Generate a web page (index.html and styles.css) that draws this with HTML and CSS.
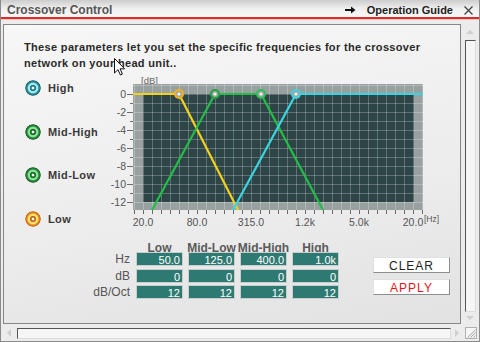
FILE: index.html
```html
<!DOCTYPE html>
<html lang="en">
<head>
    <meta charset="UTF-8">
    <title>Crossover Control</title>
    <link rel="stylesheet" href="styles.css">
</head>
<body>
    <div class="window">
        <div class="titlebar">
            <span class="title">Crossover Control</span>
            <span class="guide">
                <svg class="guide-arrow" width="11" height="8" viewBox="0 0 11 8"><path d="M0 4H7" stroke="#111" stroke-width="2"/><path d="M6 0.5L10.5 4L6 7.5Z" fill="#111"/></svg>
                Operation Guide
            </span>
            <svg class="close" width="9" height="9" viewBox="0 0 9 9"><path d="M0.5 0.5L8.5 8.5M8.5 0.5L0.5 8.5" stroke="#444" stroke-width="1.3"/></svg>
        </div>

        <div class="window-body">
            <div class="panel">
                <p class="intro">These parameters let you set the specific frequencies for the crossover network on your head unit..</p>

                <div class="main">
                    <ul class="bands">
                        <li><span class="dot dot-high"></span>High</li>
                        <li><span class="dot dot-green"></span>Mid-High</li>
                        <li><span class="dot dot-green"></span>Mid-Low</li>
                        <li><span class="dot dot-low"></span>Low</li>
                    </ul>

                    <svg class="chart" width="345" height="153" viewBox="-15 0 345 153">
                        <defs>
                            <pattern id="grid" x="28" y="18" width="9" height="9" patternUnits="userSpaceOnUse">
                                <path d="M0.5 0V9M0 0.5H9" stroke="#ffffff" stroke-opacity="0.24" fill="none"/>
                            </pattern>
                            <pattern id="ticks" x="28" y="0" width="9" height="9" patternUnits="userSpaceOnUse">
                                <path d="M0.5 0V9" stroke="#6a6a6a"/>
                            </pattern>
                        </defs>

                        <text class="unit" x="26" y="7.5">[dB]</text>
                        <g class="ylabels">
                            <text x="11" y="21.5">0</text>
                            <text x="11" y="39.5">-2</text>
                            <text x="11" y="57.5">-4</text>
                            <text x="11" y="75.5">-6</text>
                            <text x="11" y="93.5">-8</text>
                            <text x="11" y="111.5">-10</text>
                            <text x="11" y="129.5">-12</text>
                        </g>
                        <path class="yticks" d="M12 18.5H18M15 27.5H18M12 36.5H18M15 45.5H18M12 54.5H18M15 63.5H18M12 72.5H18M15 81.5H18M12 90.5H18M15 99.5H18M12 108.5H18M15 117.5H18M12 126.5H18"/>

                        <rect x="18" y="8" width="290" height="126" fill="#98a0a0"/>
                        <rect x="28" y="18" width="271" height="108" fill="#2e4548"/>
                        <rect x="18" y="8" width="290" height="126" fill="url(#grid)"/>
                        <rect x="18" y="134" width="290" height="4" fill="url(#ticks)"/>

                        <g class="xlabels">
                            <text x="28" y="150">20.0</text>
                            <text x="82" y="150">80.0</text>
                            <text x="136" y="150">315.0</text>
                            <text x="190" y="150">1.2k</text>
                            <text x="244" y="150">5.0k</text>
                            <text x="298" y="150">20.0</text>
                        </g>
                        <text class="hz" x="309" y="146">[Hz]</text>

                        <!-- filter slopes -->
                        <path class="curve" d="M18 18H64L123 134" stroke="#f3d21c"/>
                        <path class="curve" d="M37 134L100 18H146L208 134" stroke="#22be46"/>
                        <path class="curve" d="M118 134L181 18H308" stroke="#3ad5e2"/>

                        <circle class="handle" cx="64" cy="18" r="4" stroke="#f2b417"/>
                        <circle class="handle" cx="100" cy="18" r="4" stroke="#1fa541"/>
                        <circle class="handle" cx="146" cy="18" r="4" stroke="#2cc055"/>
                        <circle class="handle" cx="181" cy="18" r="4" stroke="#3ad5e2"/>
                        <circle class="handle-core" cx="64" cy="18" r="1.6"/>
                        <circle class="handle-core" cx="100" cy="18" r="1.6"/>
                        <circle class="handle-core" cx="146" cy="18" r="1.6"/>
                        <circle class="handle-core" cx="181" cy="18" r="1.6"/>
                    </svg>
                </div>

                <div class="bottom">
                    <div class="values">
                        <span></span>
                        <span class="head">Low</span>
                        <span class="head">Mid-Low</span>
                        <span class="head">Mid-High</span>
                        <span class="head">High</span>

                        <span class="row-label">Hz</span>
                        <span class="cell">50.0</span>
                        <span class="cell">125.0</span>
                        <span class="cell">400.0</span>
                        <span class="cell">1.0k</span>

                        <span class="row-label">dB</span>
                        <span class="cell">0</span>
                        <span class="cell">0</span>
                        <span class="cell">0</span>
                        <span class="cell">0</span>

                        <span class="row-label">dB/Oct</span>
                        <span class="cell">12</span>
                        <span class="cell">12</span>
                        <span class="cell">12</span>
                        <span class="cell">12</span>
                    </div>

                    <div class="buttons">
                        <button class="btn">CLEAR</button>
                        <button class="btn btn-apply">APPLY</button>
                    </div>
                </div>
            </div>

            <div class="vscroll">
                <span class="arrow-up"></span>
                <div class="vtrack"></div>
                <span class="arrow-down"></span>
            </div>
        </div>

        <div class="hbar">
            <span class="arrow-left"></span>
            <div class="htrack"></div>
            <span class="arrow-right"></span>
            <svg class="grip" width="12" height="12" viewBox="0 0 12 12"><path d="M11.5 2L2 11.5M11.5 5.5L5.5 11.5M11.5 9L9 11.5" stroke="#8a8a8a"/></svg>
        </div>
    </div>

    <svg class="cursor" width="12" height="18" viewBox="0 0 12 18"><path d="M0.5 0.5V15L4 11.6L6.4 17L8.4 16.1L6.1 10.8H10.6Z" fill="#fff" stroke="#111" stroke-linejoin="round"/></svg>
</body>
</html>
```

FILE: styles.css
```css
* {
    box-sizing: border-box;
}

body {
    margin: 0;
    width: 480px;
    height: 342px;
    overflow: hidden;
    position: relative;
    font-family: 'Liberation Sans', Arial, sans-serif;
    background-color: #ffffff;
}

.window {
    width: 480px;
    height: 342px;
    display: flex;
    flex-direction: column;
    border: 1px solid #8a8a8a;
    border-top: none;
    background-color: #ececec;
}

.titlebar {
    height: 20px;
    flex: none;
    display: flex;
    align-items: center;
    padding: 1px 6px 0 6px;
    background: linear-gradient(#cdcdcd, #efefef 45%, #fafafa);
    border-bottom: 1px solid #f4c6c6;
    box-shadow: inset 0 -2px 0 #df2a2a;
}

.title {
    font-size: 12px;
    font-weight: bold;
    color: #555;
}

.guide {
    margin-left: auto;
    display: flex;
    align-items: center;
    gap: 11px;
    font-size: 11px;
    font-weight: bold;
    color: #222;
}

.close {
    margin-left: 11px;
}

.window-body {
    flex: 1;
    display: flex;
    padding: 4px 1px 0 2px;
}

.panel {
    width: 458px;
    height: 300px;
    border: 1px solid #868686;
    background: linear-gradient(170deg, #f7f7f7, #ececec 60%, #e2e2e2);
    padding: 14px 0 0 20px;
}

.intro {
    margin: 0;
    width: 430px;
    font-size: 11px;
    font-weight: bold;
    line-height: 16px;
    letter-spacing: 0.33px;
    color: #2a2a2a;
}

.main {
    display: flex;
    margin-top: 5px;
}

.bands {
    list-style: none;
    margin: 0;
    padding: 4px 0 0 1px;
    width: 76px;
}

.bands li {
    display: flex;
    align-items: center;
    gap: 7px;
    height: 16px;
    font-size: 11px;
    font-weight: bold;
    letter-spacing: 0.4px;
    color: #3a3a3a;
}

.bands li + li {
    margin-top: 27.5px;
}

.dot {
    width: 16px;
    height: 16px;
    flex: none;
}

.dot-high {
    background: radial-gradient(circle at 50% 50%, #f4ffff 0 0.8px, #247b84 1.8px 2.8px, #a6eef2 3.6px 4.6px, #39a4ae 5.6px, #1b5c64 7.3px, rgba(0,0,0,0) 8px);
}

.dot-green {
    background: radial-gradient(circle at 50% 50%, #f4fff4 0 0.8px, #1d6a2a 1.8px 2.8px, #8fe49c 3.6px 4.6px, #33a04a 5.6px, #195a26 7.3px, rgba(0,0,0,0) 8px);
}

.dot-low {
    background: radial-gradient(circle at 50% 50%, #fffaf0 0 0.8px, #b86a20 1.8px 2.8px, #ffe676 3.6px 4.6px, #f2a224 5.6px, #c4641c 7.3px, rgba(0,0,0,0) 8px);
}

.chart {
    display: block;
    flex: none;
}

.chart text {
    font-family: 'Liberation Sans', Arial, sans-serif;
    font-size: 10.5px;
    fill: #555;
}

.chart .unit {
    font-size: 9.5px;
    fill: #666;
}

.chart .hz {
    font-size: 8.5px;
    fill: #555;
}

.ylabels text {
    text-anchor: end;
}

.xlabels text {
    text-anchor: middle;
}

.yticks {
    stroke: #6a6a6a;
    fill: none;
}

.curve {
    fill: none;
    stroke-width: 2.2;
    stroke-linejoin: round;
}

.handle {
    fill: #a4a4a4;
    stroke-width: 2;
}

.handle-core {
    fill: #f2f2f2;
}

.bottom {
    display: flex;
    padding-top: 12.5px;
}

.values {
    display: grid;
    grid-template-columns: 107px repeat(4, 47px);
    grid-template-rows: 8px repeat(3, 14px);
    column-gap: 5px;
    row-gap: 2.5px;
}

.head {
    display: flex;
    justify-content: center;
    white-space: nowrap;
    font-size: 12px;
    font-weight: bold;
    line-height: 12px;
    color: #5a5a5a;
}

.row-label {
    text-align: right;
    padding-right: 1px;
    font-size: 12px;
    line-height: 14px;
    color: #555;
}

.cell {
    background-color: #2e7a72;
    border: 1px solid #c6cfcd;
    color: #ffffff;
    font-size: 11px;
    line-height: 15px;
    text-align: right;
    padding-right: 2px;
    overflow: hidden;
}

.buttons {
    display: flex;
    flex-direction: column;
    gap: 6px;
    margin: 15.5px 0 0 34px;
}

.btn {
    display: block;
    width: 77px;
    height: 16px;
    padding: 1px 0 0 0;
    background-color: #ffffff;
    border: 1px solid;
    border-color: #e0e0e0 #8e8e8e #8e8e8e #e0e0e0;
    font-family: 'Liberation Sans', Arial, sans-serif;
    font-size: 12px;
    line-height: 14px;
    letter-spacing: 1px;
    text-align: center;
    color: #222;
}

.btn-apply {
    color: #e3141c;
}

.vscroll {
    width: 16px;
    height: 300px;
    display: flex;
    flex-direction: column;
    align-items: center;
    padding: 4px 0 4px 0;
    margin-left: 1px;
}

.arrow-up, .arrow-down, .arrow-left, .arrow-right {
    width: 0;
    height: 0;
    border: 4px solid transparent;
}

.arrow-up {
    border-bottom-color: #cfcfcf;
    border-top-width: 0;
    margin-top: 2px;
}

.arrow-down {
    border-top-color: #cfcfcf;
    border-bottom-width: 0;
    margin-top: 4px;
}

.vtrack {
    width: 11px;
    flex: 1;
    margin-top: 6px;
    border: 1px solid;
    border-color: #555 #dcdcdc #dcdcdc #555;
    background-color: #f6f6f6;
}

.hbar {
    height: 16px;
    display: flex;
    align-items: center;
    padding: 0 2px 0 6px;
}

.arrow-left {
    border-right-color: #cfcfcf;
    border-left-width: 0;
}

.arrow-right {
    border-left-color: #cfcfcf;
    border-right-width: 0;
    margin-left: 4px;
}

.htrack {
    width: 435px;
    height: 11px;
    margin-left: 6px;
    border: 1px solid;
    border-color: #555 #dcdcdc #dcdcdc #555;
    background-color: #f6f6f6;
}

.grip {
    margin-left: 6px;
    border: 1px solid #b0b0b0;
    background-color: #f6f6f6;
}

.cursor {
    position: absolute;
    left: 114px;
    top: 58px;
}
```
